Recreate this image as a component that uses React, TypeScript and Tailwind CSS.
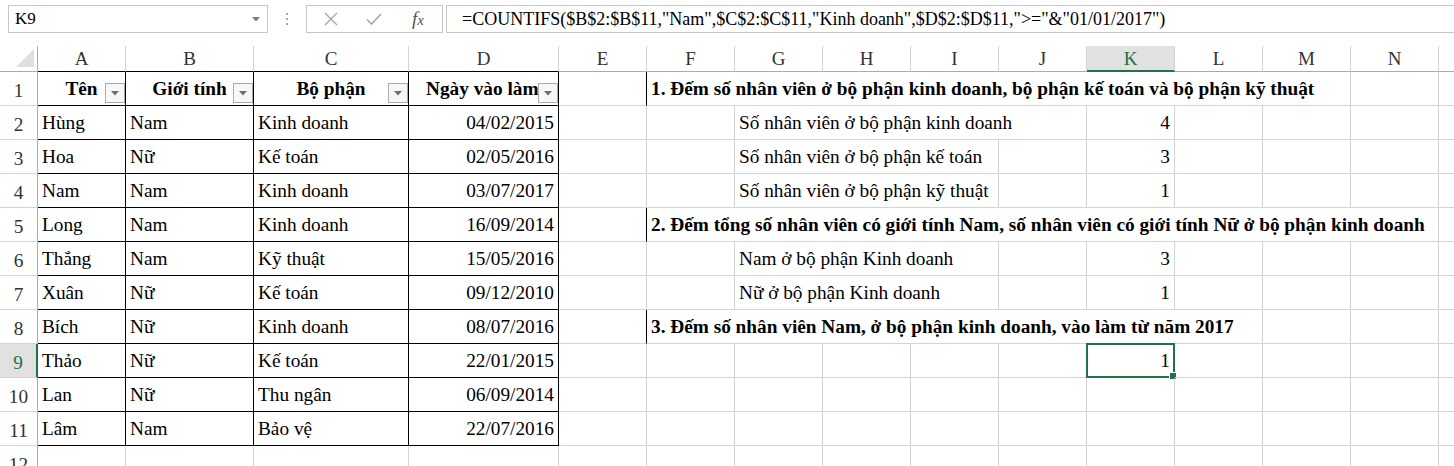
import React from 'react'

// Excel-like sheet: employee table (A1:D11) with COUNTIFS examples on the right.

const people: [string, string, string, string][] = [
  ['Hùng', 'Nam', 'Kinh doanh', '04/02/2015'],
  ['Hoa', 'Nữ', 'Kế toán', '02/05/2016'],
  ['Nam', 'Nam', 'Kinh doanh', '03/07/2017'],
  ['Long', 'Nam', 'Kinh doanh', '16/09/2014'],
  ['Thắng', 'Nam', 'Kỹ thuật', '15/05/2016'],
  ['Xuân', 'Nữ', 'Kế toán', '09/12/2010'],
  ['Bích', 'Nữ', 'Kinh doanh', '08/07/2016'],
  ['Thảo', 'Nữ', 'Kế toán', '22/01/2015'],
  ['Lan', 'Nữ', 'Thu ngân', '06/09/2014'],
  ['Lâm', 'Nam', 'Bảo vệ', '22/07/2016'],
]

const headers = ['Tên', 'Giới tính', 'Bộ phận', 'Ngày vào làm']
const letters = ['A', 'B', 'C', 'D', 'E', 'F', 'G', 'H', 'I', 'J', 'K', 'L', 'M', 'N', 'O']

interface Cell {
  span: number
  text?: string
  align?: 'left' | 'right'
  bold?: boolean
  selected?: boolean
}

const spanClass: Record<number, string> = {
  1: 'col-span-1',
  3: 'col-span-3',
  4: 'col-span-4',
  5: 'col-span-5',
  7: 'col-span-7',
  8: 'col-span-8',
  9: 'col-span-9',
  10: 'col-span-10',
}

// cells from F to O (10 columns) per row
const right: Record<number, Cell[]> = {
  1: [{ span: 8, text: '1. Đếm số nhân viên ở bộ phận kinh doanh, bộ phận kế toán và bộ phận kỹ thuật', bold: true }, { span: 1 }, { span: 1 }],
  2: [{ span: 1 }, { span: 4, text: 'Số nhân viên ở bộ phận kinh doanh' }, { span: 1, text: '4', align: 'right' }, { span: 1 }, { span: 1 }, { span: 1 }, { span: 1 }],
  3: [{ span: 1 }, { span: 3, text: 'Số nhân viên ở bộ phận kế toán' }, { span: 1 }, { span: 1, text: '3', align: 'right' }, { span: 1 }, { span: 1 }, { span: 1 }, { span: 1 }],
  4: [{ span: 1 }, { span: 3, text: 'Số nhân viên ở bộ phận kỹ thuật' }, { span: 1 }, { span: 1, text: '1', align: 'right' }, { span: 1 }, { span: 1 }, { span: 1 }, { span: 1 }],
  5: [{ span: 9, text: '2. Đếm tổng số nhân viên có giới tính Nam, số nhân viên có giới tính Nữ ở bộ phận kinh doanh', bold: true }, { span: 1 }],
  6: [{ span: 1 }, { span: 3, text: 'Nam ở bộ phận Kinh doanh' }, { span: 1 }, { span: 1, text: '3', align: 'right' }, { span: 1 }, { span: 1 }, { span: 1 }, { span: 1 }],
  7: [{ span: 1 }, { span: 3, text: 'Nữ ở bộ phận Kinh doanh' }, { span: 1 }, { span: 1, text: '1', align: 'right' }, { span: 1 }, { span: 1 }, { span: 1 }, { span: 1 }],
  8: [{ span: 7, text: '3. Đếm số nhân viên Nam, ở bộ phận kinh doanh, vào làm từ năm 2017', bold: true }, { span: 1 }, { span: 1 }, { span: 1 }],
  9: [{ span: 1 }, { span: 1 }, { span: 1 }, { span: 1 }, { span: 1 }, { span: 1, text: '1', align: 'right', selected: true }, { span: 1 }, { span: 1 }, { span: 1 }, { span: 1 }],
}

const emptyRight: Cell[] = Array.from({ length: 10 }, () => ({ span: 1 }))

const cellBase = 'relative box-border h-[34px] border-b flex items-end pb-[4px] px-[4px] whitespace-nowrap text-[19.3px] leading-[24px] text-black'

function FilterButton() {
  return (
    <div className="absolute right-0 bottom-[2px] w-[20px] h-[20px] box-border border border-[#ababab] bg-[#f7f7f7] flex items-center justify-center">
      <svg width="8" height="5" viewBox="0 0 8 5">
        <path d="M0 0 L8 0 L4 4.5 Z" fill="#6d6d6d" />
      </svg>
    </div>
  )
}

function FormulaBar() {
  return (
    <div className="h-[46px] flex items-start pt-[5px] text-[17px] text-black">
      <div className="ml-[8px] w-[260px] h-[28px] box-border border border-[#c6c6c6] flex items-center justify-between pl-[6px] pr-[7px]">
        <span>K9</span>
        <svg width="8" height="5" viewBox="0 0 8 5">
          <path d="M0 0 L8 0 L4 4.5 Z" fill="#7a7a7a" />
        </svg>
      </div>
      <div className="w-[38px] h-[28px] flex flex-col items-center justify-center gap-[3px]">
        <span className="w-[2px] h-[2px] bg-[#a8a8a8]" />
        <span className="w-[2px] h-[2px] bg-[#a8a8a8]" />
        <span className="w-[2px] h-[2px] bg-[#a8a8a8]" />
      </div>
      <div className="w-[137px] h-[28px] box-border border border-[#c6c6c6] flex items-center">
        <div className="w-[47px] flex justify-center pl-[1px]">
          <svg width="14" height="14" viewBox="0 0 14 14">
            <path d="M1 1 L13 13 M13 1 L1 13" stroke="#a6a6a6" strokeWidth="1.4" fill="none" />
          </svg>
        </div>
        <div className="w-[40px] flex justify-center">
          <svg width="16" height="12" viewBox="0 0 16 12">
            <path d="M1 6.5 L5.5 11 L15 1" stroke="#a6a6a6" strokeWidth="1.6" fill="none" />
          </svg>
        </div>
        <div className="w-[48px] flex justify-center italic text-[19px] text-[#555]">
          <span>f<span className="text-[15px]">x</span></span>
        </div>
      </div>
      <div className="ml-[3px] flex-1 h-[28px] box-border border border-[#c6c6c6] border-r-0 flex items-center pl-[15px] whitespace-nowrap text-[18px]">
        =COUNTIFS($B$2:$B$11,"Nam",$C$2:$C$11,"Kinh doanh",$D$2:$D$11,"&gt;="&amp;"01/01/2017")
      </div>
    </div>
  )
}

export default function App() {
  const rows = Array.from({ length: 12 }, (_, i) => i + 1)

  return (
    <div className="w-[1454px] h-[466px] overflow-hidden bg-white font-['Liberation_Serif',serif]">
      <FormulaBar />
      <div className="grid grid-cols-[38px_88px_128px_155px_150px_88px_88px_88px_88px_88px_88px_88px_88px_88px_88px_88px] w-max">
        {/* column header row */}
        <div className="relative box-border h-[26px] border-r border-b border-[#ababab]">
          <svg className="absolute right-[3px] bottom-[4px]" width="18" height="18" viewBox="0 0 18 18">
            <path d="M18 0 L18 18 L0 18 Z" fill="#dfdfdf" />
          </svg>
        </div>
        {letters.map((l, i) => {
          const sel = l === 'K'
          const dataCol = i < 4
          return (
            <div
              key={l}
              className={`box-border h-[26px] flex items-center justify-center pt-[2px] text-[19px] border-r border-r-[#d4d4d4] ${
                sel
                  ? 'bg-[#e1e1e1] text-[#217346] border-b-2 border-b-[#217346]'
                  : dataCol
                    ? 'text-[#333] border-b border-b-black'
                    : 'text-[#333] border-b border-b-[#ababab]'
              }`}
            >
              {l}
            </div>
          )
        })}

        {rows.map(r => {
          const person = r >= 2 && r <= 11 ? people[r - 2] : null
          const rightCells = right[r] ?? emptyRight
          const headingRow = r === 1 || r === 5 || r === 8
          return (
            <React.Fragment key={r}>
              <div
                className={`box-border h-[34px] flex items-end justify-center pb-[2px] text-[19.3px] leading-[24px] border-b border-b-[#d4d4d4] ${
                  r === 9
                    ? 'bg-[#e1e1e1] text-[#217346] border-r-2 border-r-[#217346]'
                    : 'text-[#333] border-r border-r-[#ababab]'
                }`}
              >
                {r}
              </div>

              {/* A–D */}
              {[0, 1, 2, 3].map(c => {
                const inTable = r <= 11
                const border = inTable ? 'border-r border-r-black border-b-black' : 'border-r border-r-[#d4d4d4] border-b-[#d4d4d4]'
                if (r === 1) {
                  return (
                    <div
                      key={c}
                      className={`${cellBase} ${border} font-bold overflow-hidden ${c === 3 ? 'justify-start pl-[17px]' : 'justify-center'}`}
                    >
                      <span>{headers[c]}</span>
                      <FilterButton />
                    </div>
                  )
                }
                return (
                  <div key={c} className={`${cellBase} ${border} ${c === 3 ? 'justify-end' : ''}`}>
                    {person ? person[c] : ''}
                  </div>
                )
              })}

              {/* E */}
              <div className={`${cellBase} border-b-[#d4d4d4] border-r ${headingRow ? 'border-r-black' : 'border-r-[#d4d4d4]'}`} />

              {/* F–O */}
              {rightCells.map((cell, idx) => (
                <div
                  key={idx}
                  className={`${cellBase} border-r border-[#d4d4d4] ${spanClass[cell.span]} ${
                    cell.align === 'right' ? 'justify-end' : ''
                  } ${cell.bold ? 'font-bold' : ''}`}
                >
                  {cell.text}
                  {cell.selected && (
                    <div className="absolute -left-px -top-px right-[-1px] bottom-[-1px] border-2 border-[#217346] pointer-events-none">
                      <div className="absolute -right-[4px] -bottom-[4px] w-[6px] h-[6px] bg-[#217346] border border-white box-content" />
                    </div>
                  )}
                </div>
              ))}
            </React.Fragment>
          )
        })}
      </div>
    </div>
  )
}
